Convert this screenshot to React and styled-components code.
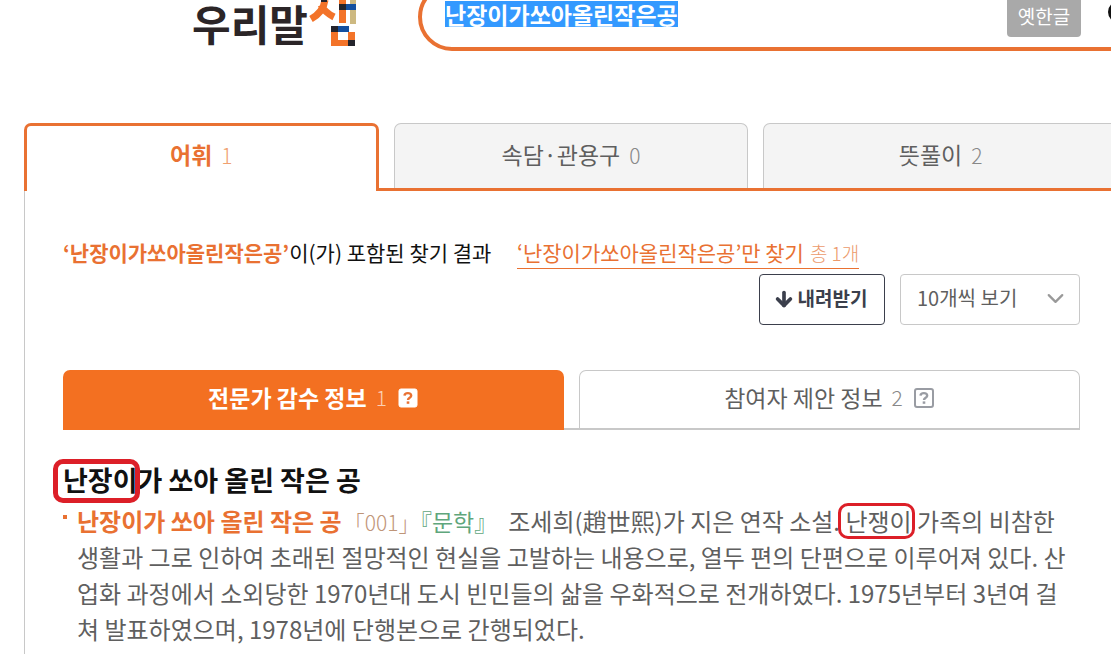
import React, { useEffect, useRef } from "react";
import styled, { createGlobalStyle, css } from "styled-components";
import { ArrowDown, ChevronDown } from "lucide-react";

const orange = "#e97132";
const line = "#c8c8c8";
const gray = "#5f5f5f";

const GlobalStyle = createGlobalStyle`
  * { box-sizing: border-box; }
  body {
    margin: 0;
    background: #fff;
    color: #111;
    font-family: "Noto Sans CJK KR", "Noto Sans", sans-serif;
    overflow: hidden;
  }
  button, input, select { font-family: inherit; }
`;

const Page = styled.div`
  overflow: hidden;
`;

const Header = styled.header`
  display: flex;
  align-items: flex-start;
  height: 123px;
  padding-left: 190px;
`;

const LogoLink = styled.a`
  display: block;
  width: 228px;
  flex: none;
`;

const SearchForm = styled.form`
  flex: 1;
  display: flex;
  align-items: center;
  height: 68px;
  margin: -17px -60px 0 0;
  padding: 0 32px 6px 23px;
  border: 4px solid ${orange};
  border-radius: 34px;
`;

const SearchInput = styled.input`
  flex: 1;
  min-width: 0;
  height: 26px;
  padding: 0;
  border: 0;
  outline: 0;
  background: transparent;
  color: #222;
  font-size: 23px;
  font-weight: 700;
  line-height: 26px;
  &::selection { background: #3399ff; color: #fff; }
`;

const OldHangulButton = styled.button`
  width: 74px;
  height: 46px;
  margin-right: 26px;
  padding: 4px 0 0;
  border: 0;
  border-radius: 4px;
  background: #a9a9a9;
  color: #fff;
  font-size: 19px;
  line-height: 36px;
`;

const IconButton = styled.button`
  display: flex;
  padding: 0;
  border: 0;
  background: none;
  color: #111;
`;

const Main = styled.main`
  margin: 0 -7px 0 24px;
`;

const TabList = styled.div`
  display: grid;
  grid-template-columns: repeat(3, 1fr);
  gap: 15px;
  height: 68px;
  border-bottom: 3px solid ${orange};
`;

const Count = styled.span`
  margin-left: 9px;
  color: ${(p) => p.$color || "#888"};
  font-size: 21px;
  font-weight: 300;
`;

const Tab = styled.button`
  padding: 0 0 4px;
  border: 1px solid ${line};
  border-bottom: 0;
  border-radius: 7px 7px 0 0;
  background: #f4f4f4;
  color: ${gray};
  font-size: 23px;
  line-height: 34px;
  ${(p) =>
    p.$active &&
    css`
      margin-bottom: -3px;
      padding-bottom: 8px;
      border: 3px solid ${orange};
      border-bottom: 0;
      background: #fff;
      color: ${orange};
      font-weight: 700;
    `}
`;

const Panel = styled.section`
  padding: 43px 38px 40px;
  border-left: 1px solid ${line};
`;

const ResultLine = styled.p`
  margin: 0;
  font-size: 21px;
  line-height: 36px;
  white-space: nowrap;
`;

const Keyword = styled.strong`
  color: ${orange};
`;

const OnlyLink = styled.a`
  display: inline-block;
  margin-left: 21px;
  border-bottom: 1px solid ${orange};
  color: ${orange};
  line-height: 30px;
  text-decoration: none;
`;

const Total = styled.span`
  margin-left: 6px;
  color: #ec9a6c;
  font-size: 19px;
  font-weight: 300;
`;

const Toolbar = styled.div`
  display: flex;
  justify-content: flex-end;
  gap: 15px;
  margin-top: 4px;
`;

const DownloadButton = styled.button`
  display: flex;
  align-items: center;
  justify-content: center;
  gap: 3px;
  width: 126px;
  height: 51px;
  padding: 0 4px 4px 0;
  border: 1px solid #3b3f4c;
  border-radius: 4px;
  background: #fff;
  color: #3b3f4c;
  font-size: 19px;
  font-weight: 700;
  & > svg { margin-top: 2px; }
`;

const SelectWrap = styled.label`
  display: grid;
  align-items: center;
  width: 180px;
  height: 51px;
  & > * { grid-area: 1 / 1; }
  & > svg {
    justify-self: end;
    margin: 0 11px 3px 0;
    color: #999;
    pointer-events: none;
  }
`;

const Select = styled.select`
  width: 100%;
  height: 100%;
  padding: 0 16px 4px;
  border: 1px solid ${line};
  border-radius: 4px;
  background: #fff;
  color: ${gray};
  font-size: 20px;
  appearance: none;
`;

const SubTabList = styled.div`
  display: grid;
  grid-template-columns: repeat(2, 1fr);
  gap: 15px;
  height: 60px;
  margin-top: 45px;
  border-bottom: 2px solid ${line};
`;

const SubTab = styled.button`
  display: flex;
  align-items: center;
  justify-content: center;
  padding: 0 0 6px;
  border: 1px solid ${line};
  border-bottom: 0;
  border-radius: 7px 7px 0 0;
  background: #fff;
  color: ${gray};
  font-size: 23px;
  ${(p) =>
    p.$active &&
    css`
      margin-bottom: -2px;
      border: 0;
      background: #f37021;
      color: #fff;
      font-weight: 700;
    `}
  & > svg { margin: 2px 0 0 10px; }
`;

const EntryTitle = styled.h2`
  margin: 30px 0 3px;
  font-size: 27px;
  font-weight: 700;
  line-height: 40px;
`;

const Circled = styled.span`
  position: relative;
  &::after {
    content: "";
    position: absolute;
    inset: ${(p) => (p.$thick ? "-1px -2px -4px -10px" : "0 -3px -1px -7px")};
    border: ${(p) => (p.$thick ? 5 : 3)}px solid #dc1f28;
    border-radius: 10px;
  }
`;

const Definitions = styled.ul`
  margin: 0;
  padding: 0 10px 0 0;
  list-style: none;
`;

const Definition = styled.li`
  display: flex;
  gap: 10px;
  color: ${gray};
  font-size: 24px;
  line-height: 36px;
  &::before {
    content: "";
    flex: none;
    width: 4px;
    height: 4px;
    margin-top: 12px;
    background: ${orange};
  }
`;

const DefinitionText = styled.p`
  margin: 0;
`;

const WordLink = styled.a`
  color: ${orange};
  font-weight: 700;
  text-decoration: none;
`;

const SenseNumber = styled.span`
  margin-left: 2px;
  color: #bf9578;
  font-size: 21px;
  font-weight: 300;
  line-height: 20px;
`;

const Field = styled.span`
  margin: 0 11px 0 1px;
  color: #5fa67c;
  font-size: 23px;
  line-height: 20px;
`;

function Logo() {
  return (
    <svg width="180" height="56" viewBox="190 0 180 56" role="img" aria-label="우리말샘">
      <text x="192" y="41" fontSize="42" fontWeight="700" fill="#2b2527">우리말</text>
      <path d="M311 19C318 15 324 8 325 0M321 5C324 11 328 14 334 17" fill="none" stroke="#f37329" strokeWidth="7" />
      <rect x="321" y="0" width="6" height="2" fill="#24242c" />
      <rect x="339" y="0" width="7" height="23" fill="#f37329" />
      <rect x="350" y="0" width="6" height="24" fill="#cdb981" />
      <rect x="339" y="4" width="7" height="6" fill="#24242c" />
      <rect x="346" y="4" width="10" height="6" fill="#1450a0" />
      <rect x="331" y="26" width="7" height="6" fill="#24242c" />
      <rect x="338" y="26" width="11" height="6" fill="#1450a0" />
      <rect x="331" y="32" width="7" height="14" fill="#f37329" />
      <rect x="338" y="40" width="10" height="6" fill="#f37329" />
      <rect x="348" y="32" width="7" height="8" fill="#f37329" />
      <rect x="348" y="40" width="7" height="6" fill="#24242c" />
    </svg>
  );
}

function HelpIcon({ filled }) {
  const ink = filled ? "#e97132" : "#999ca3";
  return (
    <svg width="22" height="22" viewBox="0 0 22 22" fill="none" aria-hidden="true">
      <rect x="2" y="2" width="18" height="18" rx="2" fill="#fff" stroke={filled ? "#fff" : ink} strokeWidth={filled ? 1 : 2} />
      <path d="M7.5 8.6C7.7 5.3 14.2 5.2 14.2 8.7C14.2 10.8 11 10.7 11 13" stroke={ink} strokeWidth="2.4" />
      <rect x="9.7" y="14.4" width="2.6" height="2.4" fill={ink} />
    </svg>
  );
}

function SearchIcon() {
  return (
    <svg width="28" height="28" viewBox="0 0 28 28" fill="none" stroke="currentColor" strokeWidth="4" aria-hidden="true">
      <circle cx="12" cy="12" r="9" />
      <path d="M19 19L26 26" />
    </svg>
  );
}

export default function App() {
  const input = useRef(null);
  useEffect(() => {
    input.current.focus();
    input.current.select();
  }, []);

  return (
    <Page>
      <GlobalStyle />
      <Header>
        <LogoLink href="#home"><Logo /></LogoLink>
        <SearchForm role="search" onSubmit={(e) => e.preventDefault()}>
          <SearchInput ref={input} aria-label="찾기" defaultValue="난장이가쏘아올린작은공" spellCheck={false} />
          <OldHangulButton type="button">옛한글</OldHangulButton>
          <IconButton type="submit" aria-label="찾기"><SearchIcon /></IconButton>
        </SearchForm>
      </Header>
      <Main>
        <TabList role="tablist">
          <Tab role="tab" aria-selected="true" $active>어휘<Count $color="#f0a070">1</Count></Tab>
          <Tab role="tab" aria-selected="false">속담·관용구<Count>0</Count></Tab>
          <Tab role="tab" aria-selected="false">뜻풀이<Count>2</Count></Tab>
        </TabList>
        <Panel>
          <ResultLine>
            <Keyword>‘난장이가쏘아올린작은공’</Keyword>이(가) 포함된 찾기 결과{" "}
            <OnlyLink href="#only">‘난장이가쏘아올린작은공’만 찾기<Total>총 1개</Total></OnlyLink>
          </ResultLine>
          <Toolbar>
            <DownloadButton type="button">
              <ArrowDown size={22} strokeWidth={4} aria-hidden="true" />내려받기
            </DownloadButton>
            <SelectWrap>
              <Select aria-label="보기 개수" defaultValue="10">
                <option value="10">10개씩 보기</option>
              </Select>
              <ChevronDown size={27} strokeWidth={2} aria-hidden="true" />
            </SelectWrap>
          </Toolbar>
          <SubTabList role="tablist">
            <SubTab role="tab" aria-selected="true" $active>
              전문가 감수 정보<Count $color="#fbd0b5">1</Count><HelpIcon filled />
            </SubTab>
            <SubTab role="tab" aria-selected="false">
              참여자 제안 정보<Count>2</Count><HelpIcon />
            </SubTab>
          </SubTabList>
          <EntryTitle><Circled $thick>난장이</Circled>가 쏘아 올린 작은 공</EntryTitle>
          <Definitions>
            <Definition>
              <DefinitionText>
                <WordLink href="#entry">난장이가 쏘아 올린 작은 공</WordLink>
                <SenseNumber>「001」</SenseNumber>
                <Field>『문학』</Field>
                조세희(趙世熙)가 지은 연작 소설. <Circled>난쟁이</Circled> 가족의 비참한 생활과 그로 인하여 초래된 절망적인 현실을 고발하는 내용으로, 열두 편의 단편으로 이루어져 있다. 산업화 과정에서 소외당한 1970년대 도시 빈민들의 삶을 우화적으로 전개하였다. 1975년부터 3년여 걸쳐 발표하였으며, 1978년에 단행본으로 간행되었다.
              </DefinitionText>
            </Definition>
          </Definitions>
        </Panel>
      </Main>
    </Page>
  );
}
